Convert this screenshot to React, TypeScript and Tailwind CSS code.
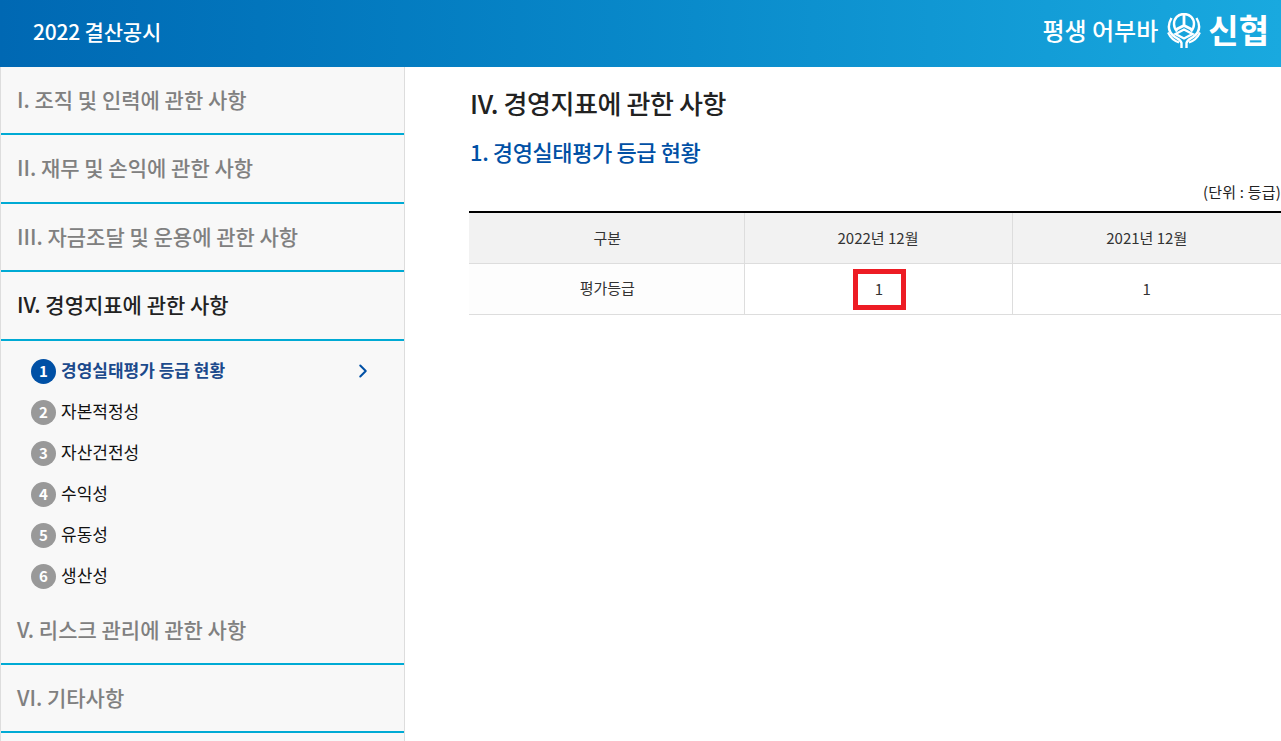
import { ChevronRight } from "lucide-react";

const KR = "font-['Noto_Sans_CJK_KR','Noto_Sans',sans-serif]";

const TOP_MENU = [
  { label: "I. 조직 및 인력에 관한 사항" },
  { label: "II. 재무 및 손익에 관한 사항" },
  { label: "III. 자금조달 및 운용에 관한 사항" },
  { label: "IV. 경영지표에 관한 사항", active: true },
];

const SUB_MENU = ["경영실태평가 등급 현황", "자본적정성", "자산건전성", "수익성", "유동성", "생산성"];

function Logo() {
  return (
    <svg width="34" height="36" viewBox="0 0 34 36" fill="none" stroke="#fff" aria-hidden="true">
      <path d="M17 1C11 1 7 5.5 7 11C7 14 8.2 16.5 10 18.5" strokeWidth="2.4" />
      <path d="M17 1C23 1 27 5.5 27 11C27 14 25.8 16.5 24 18.5" strokeWidth="2.4" />
      <path d="M17 1V12.5M17 12.5L9 16.5M17 12.5L25 16.5" strokeWidth="2.8" />
      <path d="M8.5 21L17 16.5L25.5 21L17 25.5Z" strokeWidth="2.4" />
      <path d="M4.5 5C0.5 12 1 19 8 24C11 26 14 27 14.5 30V35" strokeWidth="2.4" />
      <path d="M29.5 5C33.5 12 33 19 26 24C23 26 20 27 19.5 30V35" strokeWidth="2.4" />
      <path d="M1 19.5C3.5 25 7.5 28 12 29.5" strokeWidth="2" />
      <path d="M33 19.5C30.5 25 26.5 28 22 29.5" strokeWidth="2" />
    </svg>
  );
}

function MenuItem({ label, active }: { label: string; active?: boolean }) {
  return (
    <div
      className={`h-[68.4px] flex items-center pl-[16px] pb-[1px] border-b-2 border-[#00aad4] text-[21px] font-medium ${
        active ? "text-[#222]" : "text-[#808080]"
      }`}
    >
      {label}
    </div>
  );
}

export default function App() {
  return (
    <div className={`${KR} h-screen overflow-hidden bg-white flex flex-col`}>
      <header className="h-[67px] shrink-0 flex items-center justify-between pl-[33px] pr-[12px] bg-gradient-to-r from-[#0068b3] to-[#19a9df] text-white">
        <div className="text-[21px] font-medium tracking-[-0.2px] -mt-[3px]">2022 결산공시</div>
        <div className="flex items-center -mt-[6px]">
          <span className="text-[24px] font-medium mr-[9px] -mt-[2px]">평생 어부바</span>
          <Logo />
          <span className="text-[33px] font-bold ml-[7px] leading-none -mt-[3px]">신협</span>
        </div>
      </header>

      <div className="flex flex-1 min-h-0">
        <aside className="w-[405px] shrink-0 bg-[#f8f8f8] border-l border-r border-[#dddddd]">
          {TOP_MENU.map((m) => (
            <MenuItem key={m.label} label={m.label} active={m.active} />
          ))}
          <ul className="pt-[10px] pl-[30px]">
            {SUB_MENU.map((s, i) => (
              <li key={s} className="h-[41px] flex items-center relative">
                <span
                  className={`w-[25px] h-[25px] rounded-full flex items-center justify-center text-white text-[15px] font-bold ${
                    i === 0 ? "bg-[#0050a5]" : "bg-[#999999]"
                  }`}
                >
                  {i + 1}
                </span>
                <span
                  className={`ml-[5px] text-[17px] -mt-[2px] ${
                    i === 0 ? "font-bold text-[#1c4a8c]" : "text-[#111]"
                  }`}
                >
                  {s}
                </span>
                {i === 0 && (
                  <ChevronRight className="absolute left-[321px] top-[9px] text-[#0050a5]" size={22} strokeWidth={2.2} />
                )}
              </li>
            ))}
          </ul>
          <MenuItem label="V. 리스크 관리에 관한 사항" />
          <MenuItem label="VI. 기타사항" />
        </aside>

        <main className="flex-1 min-w-0 pl-[64px]">
          <h1 className="mt-[18px] text-[26px] leading-[36px] font-medium tracking-[-0.4px] text-[#222] pl-[1px]">
            IV. 경영지표에 관한 사항
          </h1>
          <h2 className="mt-[14px] text-[22px] leading-[32px] font-medium tracking-[-0.4px] text-[#0050a5] pl-[1px]">
            1. 경영실태평가 등급 현황
          </h2>
          <div className="mt-[15px] h-[20px] text-right text-[15px] leading-[20px] tracking-[0.2px] text-[#222]">(단위 : 등급)</div>
          <div className="relative mt-[9px]">
            <table className="w-full table-fixed border-t-2 border-black text-[15px] text-[#333] text-center">
              <colgroup>
                <col className="w-[275px]" />
                <col className="w-[268px]" />
                <col />
              </colgroup>
              <tbody>
                <tr className="h-[51px] bg-[#f2f2f2]">
                  <td className="border-b border-r border-[#dddddd] pl-[2px]">구분</td>
                  <td className="border-b border-r border-[#dddddd]">2022년 12월</td>
                  <td className="border-b border-[#dddddd]">2021년 12월</td>
                </tr>
                <tr className="h-[51px]">
                  <td className="border-b border-r border-[#dddddd] bg-[#fdfdfd] pl-[2px]">평가등급</td>
                  <td className="border-b border-r border-[#dddddd] pl-[2px] pt-[1px]">1</td>
                  <td className="border-b border-[#dddddd] pt-[1px]">1</td>
                </tr>
              </tbody>
            </table>
            <div className="absolute left-[384px] top-[58px] w-[53px] h-[41px] border-[5px] border-[#ed1c24]" />
          </div>
        </main>
      </div>
    </div>
  );
}
